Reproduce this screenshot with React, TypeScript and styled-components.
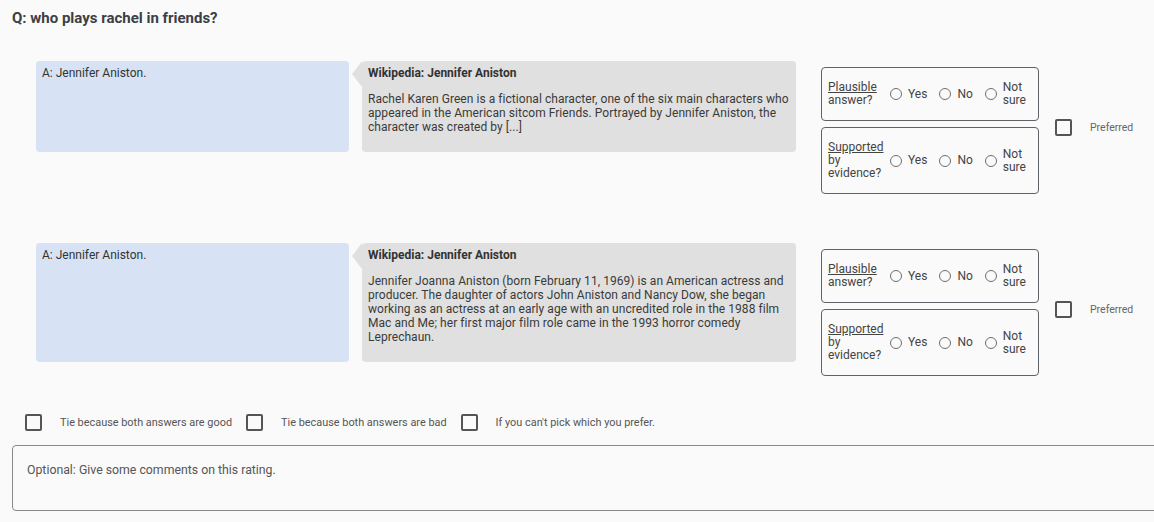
import React from "react";
import styled, { createGlobalStyle } from "styled-components";

const Global = createGlobalStyle`
  html, body { margin: 0; padding: 0; background: #fafafa; }
  body { font-family: Roboto, "Liberation Sans", Arial, sans-serif; color: #333; }
  * { box-sizing: border-box; }
`;

const Page = styled.div`
  width: 1154px;
  height: 522px;
  overflow: hidden;
  padding: 10px 0 0 12px;
  background: #fafafa;
`;

const Question = styled.h1`
  margin: 0;
  font-size: 15px;
  line-height: 17px;
  font-weight: 700;
  color: #3c4043;
`;

const Rows = styled.div`
  display: flex;
  flex-direction: column;
  gap: 49px;
  margin-top: 34px;
`;

const Row = styled.div`
  display: flex;
  align-items: flex-start;
  margin-left: 24px;
`;

const Pair = styled.div`
  display: flex;
  align-items: stretch;
  gap: 13px;
`;

const AnswerBox = styled.div`
  width: 313px;
  background: #d7e3f4;
  border-radius: 4px;
  padding: 5px 6px;
  font-size: 12px;
  line-height: 14px;
  color: #333;
`;

const Evidence = styled.div`
  position: relative;
  width: 434px;
  background: #e0e0e0;
  border-radius: 4px;
  padding: 5px 6px 18px 6px;
  font-size: 12px;
  line-height: 14px;
  color: #3a3a3a;
  &::before {
    content: "";
    position: absolute;
    left: -10px;
    top: 0;
    border-style: solid;
    border-width: 13px 10px 13px 0;
    border-color: transparent #e0e0e0 transparent transparent;
  }
`;

const EvTitle = styled.div`
  font-weight: 700;
  color: #333;
`;

const EvBody = styled.p`
  margin: 12px 0 0;
  width: 424px;
  letter-spacing: 0.05px;
`;

const RatingCol = styled.div`
  display: flex;
  flex-direction: column;
  gap: 6px;
  width: 218px;
  margin-left: 25px;
  margin-top: 6px;
`;

const RatingBox = styled.div`
  display: flex;
  align-items: center;
  border: 1px solid #5f6368;
  border-radius: 4px;
  padding: 13px 6px 13px 6px;
  font-size: 12px;
  line-height: 13px;
  color: #444;
`;

const RatingLabel = styled.div`
  width: 62px;
  flex: none;
`;

const Underline = styled.span`
  text-decoration: underline;
`;

const Option = styled.label`
  display: flex;
  align-items: center;
  gap: 6px;
  margin-right: 12px;
  &:last-child { margin-right: 0; }
`;

const Radio = styled.span`
  width: 12px;
  height: 12px;
  flex: none;
  border-radius: 50%;
  border: 1px solid #6f6f6f;
  background: #fafafa;
`;

const OptText = styled.span<{ $narrow?: boolean }>`
  max-width: ${(p) => (p.$narrow ? "24px" : "none")};
`;

const PrefWrap = styled.div`
  display: flex;
  align-items: center;
  align-self: center;
  margin-left: 16px;
  gap: 18px;
`;

const Box = styled.span`
  width: 17px;
  height: 17px;
  flex: none;
  border: 2px solid #555;
  border-radius: 2px;
`;

const SmallText = styled.span`
  font-size: 10.5px;
  color: #666;
`;

const TieRow = styled.div`
  display: flex;
  align-items: center;
  margin: 38px 0 0 13px;
`;

const TieItem = styled.label`
  display: flex;
  align-items: center;
  gap: 18px;
  margin-right: 14px;
`;

const TieText = styled.span`
  font-size: 10.9px;
  color: #555;
`;

const Comment = styled.div`
  margin-top: 14px;
  width: 1160px;
  height: 66px;
  border: 1px solid #888;
  border-radius: 4px;
  padding: 17px 14px 15px;
  font-size: 12.3px;
  line-height: 14px;
  color: #555;
`;

type Item = { evidence: string };

const items: Item[] = [
  {
    evidence:
      "Rachel Karen Green is a fictional character, one of the six main characters who appeared in the American sitcom Friends. Portrayed by Jennifer Aniston, the character was created by [...]",
  },
  {
    evidence:
      "Jennifer Joanna Aniston (born February 11, 1969) is an American actress and producer. The daughter of actors John Aniston and Nancy Dow, she began working as an actress at an early age with an uncredited role in the 1988 film Mac and Me; her first major film role came in the 1993 horror comedy Leprechaun.",
  },
];

const Options = () => (
  <>
    <Option><Radio /><OptText>Yes</OptText></Option>
    <Option><Radio /><OptText>No</OptText></Option>
    <Option><Radio /><OptText $narrow>Not sure</OptText></Option>
  </>
);

export default function App() {
  return (
    <Page>
      <Global />
      <Question>Q: who plays rachel in friends?</Question>
      <Rows>
        {items.map((it, i) => (
          <Row key={i}>
            <Pair>
              <AnswerBox>A: Jennifer Aniston.</AnswerBox>
              <Evidence>
                <EvTitle>Wikipedia: Jennifer Aniston</EvTitle>
                <EvBody>{it.evidence}</EvBody>
              </Evidence>
            </Pair>
            <RatingCol>
              <RatingBox>
                <RatingLabel><Underline>Plausible</Underline><br />answer?</RatingLabel>
                <Options />
              </RatingBox>
              <RatingBox>
                <RatingLabel><Underline>Supported</Underline><br />by<br />evidence?</RatingLabel>
                <Options />
              </RatingBox>
            </RatingCol>
            <PrefWrap>
              <Box />
              <SmallText>Preferred</SmallText>
            </PrefWrap>
          </Row>
        ))}
      </Rows>
      <TieRow>
        <TieItem><Box /><TieText>Tie because both answers are good</TieText></TieItem>
        <TieItem><Box /><TieText>Tie because both answers are bad</TieText></TieItem>
        <TieItem><Box /><TieText>If you can't pick which you prefer.</TieText></TieItem>
      </TieRow>
      <Comment>Optional: Give some comments on this rating.</Comment>
    </Page>
  );
}
